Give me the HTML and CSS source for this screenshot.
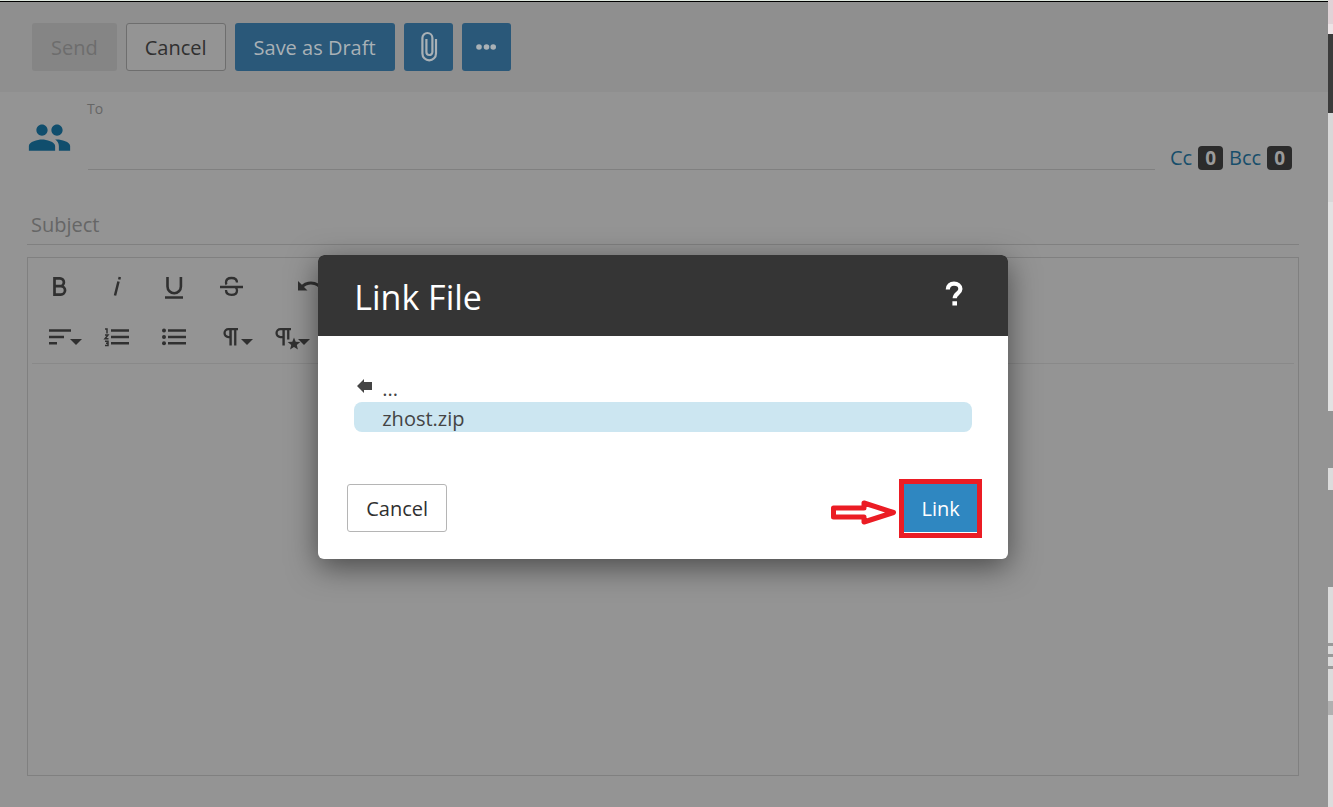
FILE: index.html
```
<!DOCTYPE html>
<html lang="en">
<head>
    <meta charset="UTF-8">
    <title>Link File</title>
    <link rel="stylesheet" href="styles.css">
</head>
<body>
<div class="page">
    <main class="compose">
        <div class="actions">
            <button class="btn btn-disabled" disabled>Send</button>
            <button class="btn btn-plain">Cancel</button>
            <button class="btn btn-blue">Save as Draft</button>
            <button class="btn btn-blue btn-icon" aria-label="Attach">
                <svg width="20" height="32" viewBox="0 0 20 32" fill="none" stroke="currentColor" stroke-width="2.2">
                    <path d="M18 8v14.500a6.800 6.800 0 0 1-13.600 0V7a5 5 0 0 1 10 0v14a3 3 0 0 1-6 0V8"/>
                </svg>
            </button>
            <button class="btn btn-blue btn-icon" aria-label="More">
                <svg width="20" height="8" viewBox="0 0 20 8" fill="currentColor">
                    <circle cx="3" cy="4" r="2.800"/><circle cx="10.500" cy="4" r="2.800"/><circle cx="17.200" cy="4" r="2.800"/>
                </svg>
            </button>
        </div>

        <div class="recipients">
            <svg class="people" width="45" height="45" viewBox="0 0 24 24" fill="currentColor">
                <path d="M16 11c1.660 0 2.990-1.340 2.990-3S17.660 5 16 5s-3 1.340-3 3 1.340 3 3 3zm-8 0c1.660 0 2.990-1.340 2.990-3S9.660 5 8 5 5 6.340 5 8s1.340 3 3 3zm0 2c-2.330 0-7 1.170-7 3.500V19h14v-2.500c0-2.330-4.670-3.500-7-3.500zm8 0c-.29 0-.62.02-.97.05 1.160.84 1.970 1.970 1.970 3.450V19h6v-2.500c0-2.330-4.670-3.500-7-3.500z"/>
            </svg>
            <div class="to-field">
                <label for="to">To</label>
                <input id="to" type="text">
            </div>
            <div class="copies">
                <a href="#">Cc</a><span class="badge">0</span>
                <a href="#">Bcc</a><span class="badge">0</span>
            </div>
        </div>

        <input class="subject" type="text" placeholder="Subject" aria-label="Subject">

        <div class="editor">
            <div class="tools">
                <div class="tool-row">
                    <button class="tool" aria-label="Bold">
                        <svg viewBox="0 0 57 51" fill="none" stroke="currentColor" stroke-width="2.7"><path d="M22.500 17.300h5.500a3.900 3.900 0 0 1 0 7.800h-5.500zM22.500 25.100h6.300a4.200 4.200 0 0 1 0 8.500h-6.300z"/></svg>
                    </button>
                    <button class="tool" aria-label="Italic">
                        <svg viewBox="0 0 57 51" fill="none" stroke="currentColor" stroke-width="2.5"><path d="M29.500 20.500L26 34.500M30.800 16l-.6 2.500"/></svg>
                    </button>
                    <button class="tool" aria-label="Underline">
                        <svg viewBox="0 0 57 51" fill="none" stroke="currentColor" stroke-width="2.6"><path d="M21.500 16v9.500a6.700 6.700 0 0 0 13.400 0V16M19 36.500h18"/></svg>
                    </button>
                    <button class="tool" aria-label="Strikethrough">
                        <svg viewBox="0 0 57 51" fill="none" stroke="currentColor" stroke-width="2.3"><path d="M17 26h23M34 21.500c0-3-2.500-4.500-5.500-4.500s-5.500 1.500-5.500 4.500c0 .8.200 1.500.6 2M23 29c0 3.200 2.500 4.800 5.500 4.800s5.500-1.500 5.500-4.400c0-1.300-.5-2.300-1.500-3"/></svg>
                    </button>
                    <button class="tool tool-undo" aria-label="Undo">
                        <svg viewBox="0 0 57 51" fill="currentColor"><path d="M17 20v9.500h9.500l-3.500-3.500a11 11 0 0 1 17.500 5.500l2.800-1a14 14 0 0 0-22.400-6.700z"/></svg>
                    </button>
                </div>
                <div class="tool-row">
                    <button class="tool" aria-label="Align">
                        <svg viewBox="0 0 57 51" fill="none" stroke="currentColor" stroke-width="2.6"><path d="M17 18.500h22M17 25h15M17 31.300h8"/><path d="M38 27h12l-6 6z" fill="currentColor" stroke="none"/></svg>
                    </button>
                    <button class="tool" aria-label="Numbered list">
                        <svg viewBox="0 0 57 51" fill="none" stroke="currentColor" stroke-width="2.6"><path d="M22 18.500h18M22 25h18M22 31.300h18"/><path d="M16 17h2v4.500M16 23h3l-3 3.800h3.500M16 29.200h3v4.300h-3M17 31.300h2" stroke-width="1.5"/></svg>
                    </button>
                    <button class="tool" aria-label="Bullet list">
                        <svg viewBox="0 0 57 51" fill="none" stroke="currentColor" stroke-width="2.6"><path d="M22 18.500h18M22 25h18M22 31.300h18"/><g fill="currentColor" stroke="none"><circle cx="18" cy="18.500" r="2"/><circle cx="18" cy="25" r="2"/><circle cx="18" cy="31.300" r="2"/></g></svg>
                    </button>
                    <button class="tool" aria-label="Paragraph format">
                        <svg viewBox="0 0 57 51" fill="currentColor"><path d="M25.500 16H35v2.300h-1.600v15.200h-2.300V18.300h-2.300v15.200h-2.400v-7.300h-.9a5.100 5.100 0 0 1 0-10.200zm.8 2.300h-.8a2.800 2.800 0 0 0 0 5.600h.8z"/><path d="M38 27h12l-6 6z"/></svg>
                    </button>
                    <button class="tool" aria-label="Paragraph style">
                        <svg viewBox="0 0 57 51" fill="currentColor"><path d="M20.500 16H31v2.300h-1.600v9.200h-2.300v-9.200h-2.300v15.200h-2.400v-7.300h-1.900a5.100 5.100 0 0 1 0-10.200zm1.900 2.300h-1.900a2.800 2.800 0 0 0 0 5.600h1.900z"/><path d="M34 25.500l1.700 4.300 4.600.3-3.500 3 1.100 4.400-3.900-2.400-3.900 2.400 1.100-4.400-3.500-3 4.600-.3z"/><path d="M38 27h12l-6 6z"/></svg>
                    </button>
                </div>
            </div>
            <textarea class="message" aria-label="Message"></textarea>
        </div>

        <div class="overlay">
            <section class="dialog" role="dialog" aria-labelledby="dialog-title">
                <header class="dialog-head">
                    <h1 id="dialog-title">Link File</h1>
                    <button class="help" aria-label="Help">
                        <svg width="20" height="28" viewBox="0 0 20 28" fill="none" stroke="currentColor" stroke-width="4.2"><path d="M3.800 10.500C3.800 6.500 6.500 4.600 10 4.600s6.400 2.100 6.400 5.400c0 4.300-5.700 4.400-5.700 9.300M8.400 24.300h4.600"/></svg>
                    </button>
                </header>
                <ul class="files">
                    <li>
                        <svg class="back" width="16" height="16" viewBox="0 0 16 16" fill="currentColor"><path d="M0 8l7-7v3h8v8H7v3z"/></svg>
                        <a href="#">...</a>
                    </li>
                    <li class="selected"><a href="#">zhost.zip</a></li>
                </ul>
                <footer class="dialog-foot">
                    <button class="btn btn-cancel">Cancel</button>
                    <div class="confirm">
                        <button class="btn btn-link">Link</button>
                        <svg class="arrow" width="66" height="26" viewBox="0 0 66 26" fill="none" stroke="currentColor" stroke-width="5" stroke-linejoin="round"><path d="M2.500 8h30.500V3L62.500 12.500 33 22V17H2.500z"/></svg>
                    </div>
                </footer>
            </section>
        </div>
    </main>
    <aside class="edge"></aside>
</div>
</body>
</html>
```
FILE: styles.css
```
* {
    box-sizing: border-box;
}
body {
    margin: 0;
    font-family: "Open Sans", "Noto Sans", sans-serif;
    font-size: 20px;
    color: #303030;
}
button, input, textarea {
    font: inherit;
    color: inherit;
}
a {
    color: inherit;
    text-decoration: none;
}
svg {
    display: block;
}
.page {
    display: flex;
    min-height: 100vh;
}
.compose {
    position: relative;
    flex: 1;
    display: flex;
    flex-direction: column;
    background-color: #949494;
    border-top: 1px solid #dfe8df;
}

/* top buttons */
.actions {
    display: flex;
    gap: 9px;
    padding: 21px 32px;
    border-top: 1px solid #000;
    background-color: #8f8f8f;
}
.btn {
    height: 48px;
    padding: 0 18px;
    border: 1px solid transparent;
    border-radius: 3px;
    cursor: pointer;
}
.btn-disabled {
    background-color: #858585;
    color: #6d6d6d;
}
.btn-plain {
    background-color: #949494;
    border-color: #6e6e6e;
}
.btn-blue {
    background-color: #2a5879;
    color: #a9b1b6;
}
.btn-icon {
    display: flex;
    justify-content: center;
    align-items: center;
    width: 49px;
    padding: 0;
}

/* recipients */
.recipients {
    display: flex;
    align-items: flex-end;
    height: 78px;
    padding: 0 36px 0 27px;
}
.people {
    color: #104e6d;
    margin: 0 16px 10px 0;
}
.to-field {
    flex: 1;
    display: flex;
    flex-direction: column;
    margin-right: 15px;
}
.to-field label {
    font-size: 14px;
    line-height: 20px;
    color: #666;
    margin-left: -1px;
}
.to-field input {
    height: 51px;
    border: 0;
    border-bottom: 1px solid #808080;
    background: none;
    outline: none;
}
.copies {
    display: flex;
    gap: 6px;
    line-height: 24px;
    color: #174e6b;
}
.badge {
    padding: 0 7px;
    border-radius: 4px;
    background-color: #2b2b2b;
    color: #9a9a9a;
    font-size: 19px;
    font-weight: bold;
}
.subject {
    height: 45px;
    margin: 30px 29px 12px 27px;
    padding: 5px 4px 0;
    border: 0;
    border-bottom: 1px solid #808080;
    background: none;
    outline: none;
}
.subject::placeholder {
    color: #666;
    opacity: 1;
}

/* editor */
.editor {
    flex: 1;
    display: flex;
    flex-direction: column;
    margin: 0 29px 31px 27px;
    border: 1px solid #808080;
}
.tools {
    margin: 3px 4px 0;
    border-bottom: 1px solid #898989;
}
.tool-row {
    display: flex;
}
.tool {
    width: 57px;
    height: 51px;
    padding: 0;
    border: 0;
    background: none;
    cursor: pointer;
}
.tool-undo {
    margin-left: 21px;
}
.message {
    flex: 1;
    border: 0;
    background: none;
    resize: none;
    outline: none;
}

/* dialog */
.overlay {
    position: absolute;
    inset: 0;
    display: flex;
    justify-content: center;
    align-items: center;
    padding: 6px 2px 0 0;
}
.dialog {
    width: 52%;
    border-radius: 6px;
    background-color: #fff;
    box-shadow: 0 8px 30px rgba(0, 0, 0, 0.5);
}
.dialog-head {
    display: flex;
    justify-content: space-between;
    align-items: center;
    height: 81px;
    padding: 0 44px 0 36px;
    border-radius: 6px 6px 0 0;
    background-color: #353535;
    color: #fff;
}
.dialog-head h1 {
    margin: 0;
    padding-top: 2px;
    font-size: 34px;
    font-weight: normal;
}
.help {
    padding: 0 0 6px;
    border: 0;
    background: none;
    cursor: pointer;
}
.files {
    margin: 0;
    padding: 36px 36px 52px;
    list-style: none;
    color: #444;
}
.files li {
    position: relative;
    height: 30px;
    padding-left: 28px;
    line-height: 34px;
    border-radius: 8px;
}
.files .selected {
    background-color: #cce6f1;
}
.back {
    position: absolute;
    left: 3px;
    top: 6px;
}
.dialog-foot {
    display: flex;
    justify-content: space-between;
    padding: 0 31px 27px 29px;
}
.btn-cancel {
    background-color: #fff;
    border-color: #b5b5b5;
}
.confirm {
    position: relative;
}
.confirm::after {
    content: "";
    position: absolute;
    inset: -5px -5px -6px;
    border: 5px solid #eb1c24;
    pointer-events: none;
}
.btn-link {
    padding: 0 16px;
    border-radius: 0;
    background-color: #2f87c1;
    color: #fff;
}
.arrow {
    position: absolute;
    right: calc(100% + 7px);
    top: 16px;
    color: #eb1c24;
}

/* sliver of the window behind */
.edge {
    width: 5px;
    background: linear-gradient(#e0d3d7 24px, #ece4e6 24px 34px, #3b3b3b 34px 113px, #d8d8d8 113px 202px, #e2e2e2 202px 411px, #949494 411px 468px, #dcdcdc 468px 490px, #949494 490px 587px, #dcdcdc 587px 643px, #999 643px 646px, #dcdcdc 646px 654px, #999 654px 657px, #dcdcdc 657px 666px, #999 666px 669px, #dcdcdc 669px 701px, #b0b0b0 701px 715px, #dcdcdc 715px);
}
```
